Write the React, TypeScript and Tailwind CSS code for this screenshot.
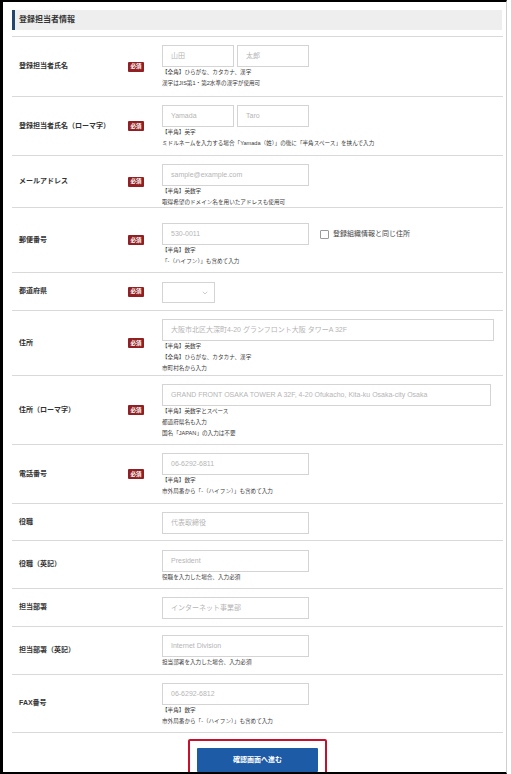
import React from 'react';
import { ChevronDown } from 'lucide-react';

type Row = {
  label: string;
  required?: boolean;
  h: string;
  pt: string;
  kind: 'pair' | 'single' | 'wide' | 'postal' | 'select';
  placeholders?: string[];
  width?: string;
  hints?: string[];
};

const rows: Row[] = [
  { label: '登録担当者氏名', required: true, h: 'h-[60px]', pt: 'pt-[8px]', kind: 'pair', placeholders: ['山田', '太郎'], hints: ['【全角】ひらがな、カタカナ、漢字', '漢字はJIS第1・第2水準の漢字が使用可'] },
  { label: '登録担当者氏名（ローマ字）', required: true, h: 'h-[59px]', pt: 'pt-[8px]', kind: 'pair', placeholders: ['Yamada', 'Taro'], hints: ['【半角】英字', 'ミドルネームを入力する場合「Yamada（姓）」の後に「半角スペース」を挟んで入力'] },
  { label: 'メールアドレス', required: true, h: 'h-[52px]', pt: 'pt-[8px]', kind: 'single', placeholders: ['sample@example.com'], hints: ['【半角】英数字', '取得希望のドメイン名を用いたアドレスも使用可'] },
  { label: '郵便番号', required: true, h: 'h-[65px]', pt: 'pt-[15px]', kind: 'postal', placeholders: ['530-0011'], hints: ['【半角】数字', '「-（ハイフン）」も含めて入力'] },
  { label: '都道府県', required: true, h: 'h-[38px]', pt: 'pt-[9px]', kind: 'select' },
  { label: '住所', required: true, h: 'h-[65px]', pt: 'pt-[8px]', kind: 'wide', width: 'w-[332px]', placeholders: ['大阪市北区大深町4-20 グランフロント大阪 タワーA 32F'], hints: ['【半角】英数字', '【全角】ひらがな、カタカナ、漢字', '市町村名から入力'] },
  { label: '住所（ローマ字）', required: true, h: 'h-[69px]', pt: 'pt-[8px]', kind: 'wide', width: 'w-[329px]', placeholders: ['GRAND FRONT OSAKA TOWER A 32F, 4-20 Ofukacho, Kita-ku Osaka-city Osaka'], hints: ['【半角】英数字とスペース', '都道府県名も入力', '国名「JAPAN」の入力は不要'] },
  { label: '電話番号', required: true, h: 'h-[59px]', pt: 'pt-[8px]', kind: 'single', placeholders: ['06-6292-6811'], hints: ['【半角】数字', '市外局番から「-（ハイフン）」も含めて入力'] },
  { label: '役職', h: 'h-[37px]', pt: 'pt-[8px]', kind: 'single', placeholders: ['代表取締役'] },
  { label: '役職（英記）', h: 'h-[48px]', pt: 'pt-[9px]', kind: 'single', placeholders: ['President'], hints: ['役職を入力した場合、入力必須'] },
  { label: '担当部署', h: 'h-[38px]', pt: 'pt-[8px]', kind: 'single', placeholders: ['インターネット事業部'] },
  { label: '担当部署（英記）', h: 'h-[48px]', pt: 'pt-[8px]', kind: 'single', placeholders: ['Internet Division'], hints: ['担当部署を入力した場合、入力必須'] },
  { label: 'FAX番号', h: 'h-[58px]', pt: 'pt-[8px]', kind: 'single', placeholders: ['06-6292-6812'], hints: ['【半角】数字', '市外局番から「-（ハイフン）」も含めて入力'] },
];

const Field = ({ placeholder, className }: { placeholder: string; className: string }) => (
  <div className={`h-[22px] border border-[#d4d4d4] bg-white px-[8px] flex items-center text-[7px] text-[#b5b5b5] whitespace-nowrap overflow-hidden ${className}`}>
    {placeholder}
  </div>
);

const FormRow = ({ row }: { row: Row }) => {
  const ph = row.placeholders || [];
  return (
    <div className={`flex border-b border-[#d9d9d9] ${row.h}`}>
      <div className="w-[150px] shrink-0 flex items-center pl-[7px]">
        <span className="w-[109px] text-[7px] font-bold text-[#333]">{row.label}</span>
        {row.required && (
          <span className="w-[16px] h-[10px] rounded-[1px] bg-[#921f22] text-white text-[5.5px] font-bold flex items-center justify-center">必須</span>
        )}
      </div>
      <div className={`flex-1 ${row.pt}`}>
        {row.kind === 'pair' && (
          <div className="flex gap-[3px]">
            <Field placeholder={ph[0]} className="w-[72px]" />
            <Field placeholder={ph[1]} className="w-[72px]" />
          </div>
        )}
        {row.kind === 'single' && <Field placeholder={ph[0]} className="w-[147px]" />}
        {row.kind === 'wide' && <Field placeholder={ph[0]} className={row.width || ''} />}
        {row.kind === 'postal' && (
          <div className="flex items-center">
            <Field placeholder={ph[0]} className="w-[147px]" />
            <span className="ml-[11px] w-[9px] h-[9px] border border-[#9a9a9a] rounded-[1px] bg-white" />
            <span className="ml-[4px] text-[7px] text-[#444]">登録組織情報と同じ住所</span>
          </div>
        )}
        {row.kind === 'select' && (
          <div className="w-[53px] h-[21px] border border-[#d4d4d4] bg-white flex items-center justify-end pr-[5px]">
            <ChevronDown size={8} strokeWidth={1.5} className="text-[#999]" />
          </div>
        )}
        {row.hints && (
          <div>
            {row.hints.map((h) => (
              <p key={h} className="text-[5.6px] leading-[11px] text-[#3a3a3a] whitespace-nowrap">{h}</p>
            ))}
          </div>
        )}
      </div>
    </div>
  );
};

export default function App() {
  return (
    <div
      className="w-[507px] h-[774px] overflow-hidden bg-white border-t-2 border-l-[3px] border-b-2 border-r border-t-black border-l-black border-b-black border-r-[#cfcfcf] pl-[9px] pr-[3px] pt-[8px]"
      style={{ fontFamily: "'Liberation Sans', 'Noto Sans CJK JP', sans-serif" }}
    >
      <div className="h-[20px] bg-[#eeeeee] border-l-[3px] border-[#24466e] flex items-center pl-[4px] mr-[1px]">
        <h2 className="text-[8px] font-bold text-[#333]">登録担当者情報</h2>
      </div>
      <div className="mt-[6px] border-t border-[#d9d9d9]">
        {rows.map((r) => (
          <FormRow key={r.label} row={r} />
        ))}
      </div>
      <div className="flex justify-center pt-[6px]">
        <div className="border-2 border-[#c8102e] rounded-[2px] px-[7px] pt-[4px] pb-[6px]">
          <button className="w-[121px] h-[24px] bg-[#1d5ba6] text-white text-[7px] font-bold rounded-[1px]">
            確認画面へ進む
          </button>
        </div>
      </div>
    </div>
  );
}
